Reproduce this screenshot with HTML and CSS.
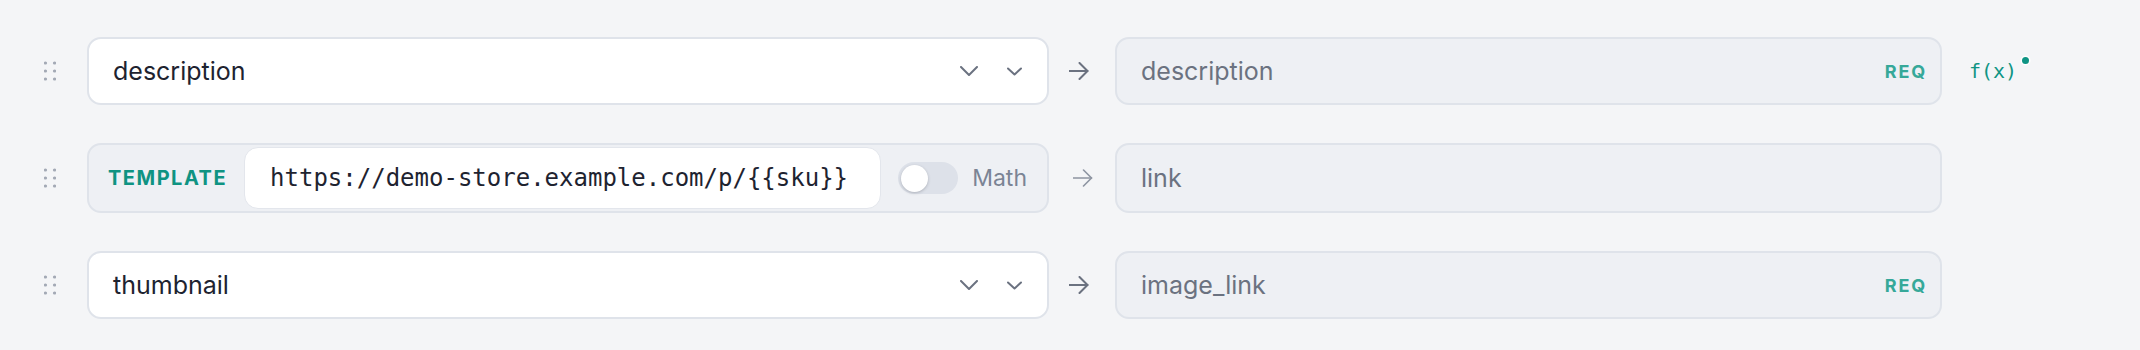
FILE: index.html
```html
<!DOCTYPE html>
<html lang="en">
<head>
<meta charset="utf-8">
<title>Field mapping</title>
<link rel="stylesheet" href="styles.css">
</head>
<body>
<div class="rows">
  <div class="row">
    <svg class="handle" width="12" height="20" viewBox="0 0 12 20"><circle cx="1.5" cy="2" r="1.6"/><circle cx="10.5" cy="2" r="1.6"/><circle cx="1.5" cy="10" r="1.6"/><circle cx="10.5" cy="10" r="1.6"/><circle cx="1.5" cy="18" r="1.6"/><circle cx="10.5" cy="18" r="1.6"/></svg>
    <div class="src">
      <span class="src-text">description</span>
      <svg class="chev chev-lg" width="18" height="10" viewBox="0 0 18 10"><polyline points="1,1 9,9 17,1"/></svg>
      <svg class="chev chev-sm" width="15" height="9" viewBox="0 0 15 9"><polyline points="1,1.5 7.5,7.5 14,1.5"/></svg>
    </div>
    <svg class="arrow" width="20" height="18" viewBox="0 0 20 18"><line x1="0" y1="9" x2="18.5" y2="9"/><polyline points="10.5,1 18.5,9 10.5,17"/></svg>
    <div class="dst">
      <span class="dst-text">description</span>
      <span class="req">REQ</span>
    </div>
    <div class="fx">f(x)<span class="fx-dot"></span></div>
  </div>

  <div class="row">
    <svg class="handle" width="12" height="20" viewBox="0 0 12 20"><circle cx="1.5" cy="2" r="1.6"/><circle cx="10.5" cy="2" r="1.6"/><circle cx="1.5" cy="10" r="1.6"/><circle cx="10.5" cy="10" r="1.6"/><circle cx="1.5" cy="18" r="1.6"/><circle cx="10.5" cy="18" r="1.6"/></svg>
    <div class="tpl">
      <span class="tpl-label">TEMPLATE</span>
      <div class="tpl-input">https://demo-store.example.com/p/{{sku}}</div>
      <span class="toggle"><span class="knob"></span></span>
      <span class="math">Math</span>
    </div>
    <svg class="arrow arrow-light" width="20" height="18" viewBox="0 0 20 18"><line x1="0" y1="9" x2="18.5" y2="9"/><polyline points="10.5,1 18.5,9 10.5,17"/></svg>
    <div class="dst">
      <span class="dst-text">link</span>
    </div>
  </div>

  <div class="row">
    <svg class="handle" width="12" height="20" viewBox="0 0 12 20"><circle cx="1.5" cy="2" r="1.6"/><circle cx="10.5" cy="2" r="1.6"/><circle cx="1.5" cy="10" r="1.6"/><circle cx="10.5" cy="10" r="1.6"/><circle cx="1.5" cy="18" r="1.6"/><circle cx="10.5" cy="18" r="1.6"/></svg>
    <div class="src">
      <span class="src-text">thumbnail</span>
      <svg class="chev chev-lg" width="18" height="10" viewBox="0 0 18 10"><polyline points="1,1 9,9 17,1"/></svg>
      <svg class="chev chev-sm" width="15" height="9" viewBox="0 0 15 9"><polyline points="1,1.5 7.5,7.5 14,1.5"/></svg>
    </div>
    <svg class="arrow" width="20" height="18" viewBox="0 0 20 18"><line x1="0" y1="9" x2="18.5" y2="9"/><polyline points="10.5,1 18.5,9 10.5,17"/></svg>
    <div class="dst">
      <span class="dst-text">image_link</span>
      <span class="req">REQ</span>
    </div>
  </div>
</div>
</body>
</html>
```

FILE: styles.css
```css
* { box-sizing: border-box; }

html, body {
  margin: 0;
  background: #f4f5f7;
}

body {
  font-family: Inter, "Noto Sans", sans-serif;
  color: #1e2330;
}

.rows {
  display: flex;
  flex-direction: column;
  gap: 38px;
  padding: 37px 0 0 44px;
}

.row {
  display: flex;
  align-items: center;
}

.handle {
  fill: #a3a9b5;
  margin-right: 31px;
  flex: none;
}

.src {
  width: 962px;
  height: 68px;
  background: #ffffff;
  border: 2px solid #dfe3ea;
  border-radius: 14px;
  display: flex;
  align-items: center;
  padding: 0 24px 0 24px;
  flex: none;
}

.src-text {
  font-size: 25px;
  flex: 1;
  color: #1e2330;
}

.chev {
  fill: none;
  stroke: #6b7280;
  stroke-width: 2;
  stroke-linecap: round;
  stroke-linejoin: round;
  flex: none;
}

.chev-lg { margin-right: 29px; }

.chev-sm { margin-right: 1px; }

.arrow {
  fill: none;
  stroke: #6b7280;
  stroke-width: 2;
  stroke-linecap: round;
  stroke-linejoin: round;
  margin: 0 26px 0 20px;
  flex: none;
}

.arrow-light {
  stroke: #8d94a1;
  stroke-width: 1.6;
  margin: 0 22px 0 24px;
}

.dst {
  width: 827px;
  height: 68px;
  background: #eef0f4;
  border: 2px solid #dfe3ea;
  border-radius: 14px;
  display: flex;
  align-items: center;
  padding: 0 15px 0 24px;
  flex: none;
}

.row:nth-child(2) .dst {
  height: 70px;
}

.dst-text {
  font-size: 25px;
  color: #6b7280;
  flex: 1;
}

.req {
  font-size: 18px;
  font-weight: 700;
  letter-spacing: 0.1em;
  color: #36a899;
  margin-right: -2px;
}

.fx {
  position: relative;
  margin-left: 27px;
  font-family: "DejaVu Sans Mono", "Liberation Mono", monospace;
  font-size: 20px;
  color: #0f9484;
}

.fx-dot {
  position: absolute;
  right: -12px;
  top: -2px;
  width: 7px;
  height: 7px;
  border-radius: 50%;
  background: #0f9484;
  box-shadow: 0 0 0 1.5px #ffffff;
}

.tpl {
  width: 962px;
  height: 70px;
  background: #eef0f4;
  border: 2px solid #dfe3ea;
  border-radius: 14px;
  display: flex;
  align-items: center;
  padding: 2px 20px 2px 19px;
  flex: none;
}

.tpl-label {
  font-size: 20px;
  font-weight: 700;
  letter-spacing: 0.075em;
  color: #0f9382;
  margin-right: 17px;
}

.tpl-input {
  width: 640px;
  height: 100%;
  background: #ffffff;
  border: 1.5px solid #e3e6ec;
  border-radius: 14px;
  display: flex;
  align-items: center;
  padding-left: 25px;
  font-family: "DejaVu Sans Mono", "Liberation Mono", monospace;
  font-size: 24px;
  color: #1e2330;
  white-space: nowrap;
  margin-right: 17px;
}

.toggle {
  width: 60px;
  height: 32px;
  border-radius: 16px;
  background: #dde1e9;
  display: flex;
  align-items: center;
  padding-left: 3px;
  margin-right: 14px;
  flex: none;
}

.knob {
  width: 27px;
  height: 27px;
  border-radius: 50%;
  background: #ffffff;
  box-shadow: 0 1px 3px rgba(30, 35, 48, 0.25);
}

.math {
  font-size: 23px;
  color: #7b8494;
}
```
